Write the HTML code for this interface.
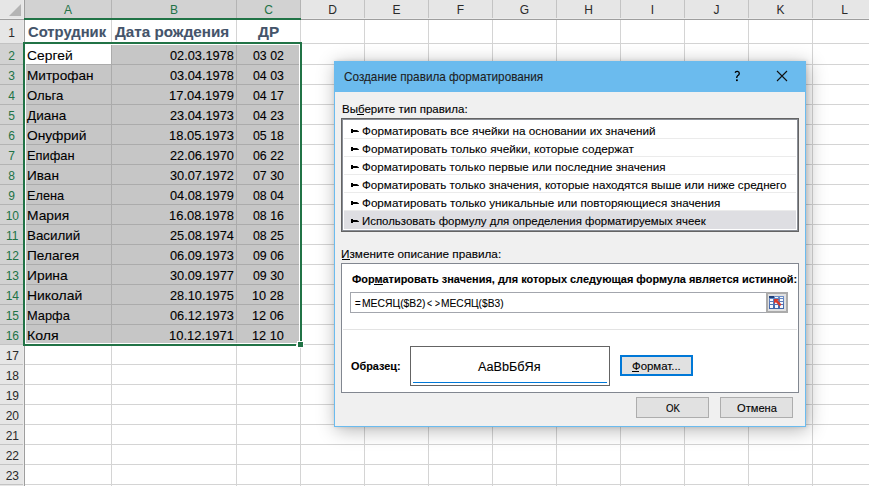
<!DOCTYPE html>
<html><head><meta charset="utf-8"><style>
html,body{margin:0;padding:0;width:869px;height:486px;overflow:hidden;background:#fff;position:relative}
body>div,body>svg{position:absolute}
.t{font-family:"Liberation Sans", sans-serif;white-space:pre;line-height:normal;-webkit-text-stroke:0.1px currentColor}
</style></head><body>
<div style="left:111px;top:20px;width:1px;height:466px;background:#D4D4D4;"></div>
<div style="left:236px;top:20px;width:1px;height:466px;background:#D4D4D4;"></div>
<div style="left:300px;top:20px;width:1px;height:466px;background:#D4D4D4;"></div>
<div style="left:364px;top:20px;width:1px;height:466px;background:#D4D4D4;"></div>
<div style="left:428px;top:20px;width:1px;height:466px;background:#D4D4D4;"></div>
<div style="left:492px;top:20px;width:1px;height:466px;background:#D4D4D4;"></div>
<div style="left:556px;top:20px;width:1px;height:466px;background:#D4D4D4;"></div>
<div style="left:620px;top:20px;width:1px;height:466px;background:#D4D4D4;"></div>
<div style="left:684px;top:20px;width:1px;height:466px;background:#D4D4D4;"></div>
<div style="left:748px;top:20px;width:1px;height:466px;background:#D4D4D4;"></div>
<div style="left:812px;top:20px;width:1px;height:466px;background:#D4D4D4;"></div>
<div style="left:876px;top:20px;width:1px;height:466px;background:#D4D4D4;"></div>
<div style="left:25px;top:43px;width:844px;height:1px;background:#D4D4D4;"></div>
<div style="left:25px;top:64px;width:844px;height:1px;background:#D4D4D4;"></div>
<div style="left:25px;top:84px;width:844px;height:1px;background:#D4D4D4;"></div>
<div style="left:25px;top:104px;width:844px;height:1px;background:#D4D4D4;"></div>
<div style="left:25px;top:124px;width:844px;height:1px;background:#D4D4D4;"></div>
<div style="left:25px;top:144px;width:844px;height:1px;background:#D4D4D4;"></div>
<div style="left:25px;top:164px;width:844px;height:1px;background:#D4D4D4;"></div>
<div style="left:25px;top:184px;width:844px;height:1px;background:#D4D4D4;"></div>
<div style="left:25px;top:204px;width:844px;height:1px;background:#D4D4D4;"></div>
<div style="left:25px;top:224px;width:844px;height:1px;background:#D4D4D4;"></div>
<div style="left:25px;top:244px;width:844px;height:1px;background:#D4D4D4;"></div>
<div style="left:25px;top:264px;width:844px;height:1px;background:#D4D4D4;"></div>
<div style="left:25px;top:284px;width:844px;height:1px;background:#D4D4D4;"></div>
<div style="left:25px;top:304px;width:844px;height:1px;background:#D4D4D4;"></div>
<div style="left:25px;top:324px;width:844px;height:1px;background:#D4D4D4;"></div>
<div style="left:25px;top:344px;width:844px;height:1px;background:#D4D4D4;"></div>
<div style="left:25px;top:364px;width:844px;height:1px;background:#D4D4D4;"></div>
<div style="left:25px;top:384px;width:844px;height:1px;background:#D4D4D4;"></div>
<div style="left:25px;top:404px;width:844px;height:1px;background:#D4D4D4;"></div>
<div style="left:25px;top:424px;width:844px;height:1px;background:#D4D4D4;"></div>
<div style="left:25px;top:444px;width:844px;height:1px;background:#D4D4D4;"></div>
<div style="left:25px;top:464px;width:844px;height:1px;background:#D4D4D4;"></div>
<div style="left:25px;top:484px;width:844px;height:1px;background:#D4D4D4;"></div>
<div style="left:25px;top:44px;width:275px;height:300px;background:#FFFFFF;"></div>
<div style="left:26px;top:45px;width:273px;height:298px;background:#C6C6C6;"></div>
<div style="left:111px;top:45px;width:1px;height:298px;background:#ABABAB;"></div>
<div style="left:236px;top:45px;width:1px;height:298px;background:#ABABAB;"></div>
<div style="left:26px;top:64px;width:273px;height:1px;background:#ABABAB;"></div>
<div style="left:26px;top:84px;width:273px;height:1px;background:#ABABAB;"></div>
<div style="left:26px;top:104px;width:273px;height:1px;background:#ABABAB;"></div>
<div style="left:26px;top:124px;width:273px;height:1px;background:#ABABAB;"></div>
<div style="left:26px;top:144px;width:273px;height:1px;background:#ABABAB;"></div>
<div style="left:26px;top:164px;width:273px;height:1px;background:#ABABAB;"></div>
<div style="left:26px;top:184px;width:273px;height:1px;background:#ABABAB;"></div>
<div style="left:26px;top:204px;width:273px;height:1px;background:#ABABAB;"></div>
<div style="left:26px;top:224px;width:273px;height:1px;background:#ABABAB;"></div>
<div style="left:26px;top:244px;width:273px;height:1px;background:#ABABAB;"></div>
<div style="left:26px;top:264px;width:273px;height:1px;background:#ABABAB;"></div>
<div style="left:26px;top:284px;width:273px;height:1px;background:#ABABAB;"></div>
<div style="left:26px;top:304px;width:273px;height:1px;background:#ABABAB;"></div>
<div style="left:26px;top:324px;width:273px;height:1px;background:#ABABAB;"></div>
<div style="left:25px;top:44px;width:86px;height:20px;background:#FFFFFF;"></div>
<div style="left:0px;top:0px;width:869px;height:19px;background:#E6E6E6;"></div>
<div style="left:25px;top:0px;width:275px;height:18px;background:#D2D2D2;"></div>
<div style="left:0px;top:19px;width:24px;height:467px;background:#E6E6E6;"></div>
<div style="left:0px;top:44px;width:24px;height:300px;background:#D2D2D2;"></div>
<div style="left:111px;top:0px;width:1px;height:19px;background:#B4B4B4;"></div>
<div style="left:236px;top:0px;width:1px;height:19px;background:#B4B4B4;"></div>
<div style="left:300px;top:0px;width:1px;height:19px;background:#C3C3C3;"></div>
<div style="left:364px;top:0px;width:1px;height:19px;background:#C3C3C3;"></div>
<div style="left:428px;top:0px;width:1px;height:19px;background:#C3C3C3;"></div>
<div style="left:492px;top:0px;width:1px;height:19px;background:#C3C3C3;"></div>
<div style="left:556px;top:0px;width:1px;height:19px;background:#C3C3C3;"></div>
<div style="left:620px;top:0px;width:1px;height:19px;background:#C3C3C3;"></div>
<div style="left:684px;top:0px;width:1px;height:19px;background:#C3C3C3;"></div>
<div style="left:748px;top:0px;width:1px;height:19px;background:#C3C3C3;"></div>
<div style="left:812px;top:0px;width:1px;height:19px;background:#C3C3C3;"></div>
<div style="left:0px;top:43px;width:24px;height:1px;background:#C3C3C3;"></div>
<div style="left:0px;top:64px;width:24px;height:1px;background:#B4B4B4;"></div>
<div style="left:0px;top:84px;width:24px;height:1px;background:#B4B4B4;"></div>
<div style="left:0px;top:104px;width:24px;height:1px;background:#B4B4B4;"></div>
<div style="left:0px;top:124px;width:24px;height:1px;background:#B4B4B4;"></div>
<div style="left:0px;top:144px;width:24px;height:1px;background:#B4B4B4;"></div>
<div style="left:0px;top:164px;width:24px;height:1px;background:#B4B4B4;"></div>
<div style="left:0px;top:184px;width:24px;height:1px;background:#B4B4B4;"></div>
<div style="left:0px;top:204px;width:24px;height:1px;background:#B4B4B4;"></div>
<div style="left:0px;top:224px;width:24px;height:1px;background:#B4B4B4;"></div>
<div style="left:0px;top:244px;width:24px;height:1px;background:#B4B4B4;"></div>
<div style="left:0px;top:264px;width:24px;height:1px;background:#B4B4B4;"></div>
<div style="left:0px;top:284px;width:24px;height:1px;background:#B4B4B4;"></div>
<div style="left:0px;top:304px;width:24px;height:1px;background:#B4B4B4;"></div>
<div style="left:0px;top:324px;width:24px;height:1px;background:#B4B4B4;"></div>
<div style="left:0px;top:344px;width:24px;height:1px;background:#C3C3C3;"></div>
<div style="left:0px;top:364px;width:24px;height:1px;background:#C3C3C3;"></div>
<div style="left:0px;top:384px;width:24px;height:1px;background:#C3C3C3;"></div>
<div style="left:0px;top:404px;width:24px;height:1px;background:#C3C3C3;"></div>
<div style="left:0px;top:424px;width:24px;height:1px;background:#C3C3C3;"></div>
<div style="left:0px;top:444px;width:24px;height:1px;background:#C3C3C3;"></div>
<div style="left:0px;top:464px;width:24px;height:1px;background:#C3C3C3;"></div>
<div style="left:0px;top:484px;width:24px;height:1px;background:#C3C3C3;"></div>
<div style="left:0px;top:18px;width:869px;height:1px;background:#EBEBEB;"></div>
<div style="left:23px;top:0px;width:1px;height:486px;background:#EBEBEB;"></div>
<div style="left:0px;top:44px;width:23px;height:300px;background:#D2D2D2;"></div>
<div style="left:25px;top:0px;width:275px;height:18px;background:#D2D2D2;"></div>
<div style="left:111px;top:0px;width:1px;height:18px;background:#B4B4B4;"></div>
<div style="left:236px;top:0px;width:1px;height:18px;background:#B4B4B4;"></div>
<div style="left:300px;top:0px;width:1px;height:18px;background:#B4B4B4;"></div>
<div style="left:0px;top:64px;width:23px;height:1px;background:#B4B4B4;"></div>
<div style="left:0px;top:84px;width:23px;height:1px;background:#B4B4B4;"></div>
<div style="left:0px;top:104px;width:23px;height:1px;background:#B4B4B4;"></div>
<div style="left:0px;top:124px;width:23px;height:1px;background:#B4B4B4;"></div>
<div style="left:0px;top:144px;width:23px;height:1px;background:#B4B4B4;"></div>
<div style="left:0px;top:164px;width:23px;height:1px;background:#B4B4B4;"></div>
<div style="left:0px;top:184px;width:23px;height:1px;background:#B4B4B4;"></div>
<div style="left:0px;top:204px;width:23px;height:1px;background:#B4B4B4;"></div>
<div style="left:0px;top:224px;width:23px;height:1px;background:#B4B4B4;"></div>
<div style="left:0px;top:244px;width:23px;height:1px;background:#B4B4B4;"></div>
<div style="left:0px;top:264px;width:23px;height:1px;background:#B4B4B4;"></div>
<div style="left:0px;top:284px;width:23px;height:1px;background:#B4B4B4;"></div>
<div style="left:0px;top:304px;width:23px;height:1px;background:#B4B4B4;"></div>
<div style="left:0px;top:324px;width:23px;height:1px;background:#B4B4B4;"></div>
<div style="left:0px;top:19px;width:869px;height:1px;background:#9E9E9E;"></div>
<div style="left:24px;top:0px;width:1px;height:486px;background:#9E9E9E;"></div>
<div style="left:24px;top:18px;width:277px;height:2px;background:#217346;"></div>
<svg style="position:absolute;left:0;top:0" width="24" height="19"><polygon points="21,4 21,16 9,16" fill="#B4B4B4"/></svg>
<div class="t" style="left:-132.0px;width:400px;text-align:center;top:3.14px;font-size:12px;color:#217346;font-weight:normal;-webkit-text-stroke:0;">A</div>
<div class="t" style="left:-26.0px;width:400px;text-align:center;top:3.14px;font-size:12px;color:#217346;font-weight:normal;-webkit-text-stroke:0;">B</div>
<div class="t" style="left:68.5px;width:400px;text-align:center;top:3.14px;font-size:12px;color:#217346;font-weight:normal;-webkit-text-stroke:0;">C</div>
<div class="t" style="left:132.5px;width:400px;text-align:center;top:3.14px;font-size:12px;color:#2A2A2A;font-weight:normal;-webkit-text-stroke:0;">D</div>
<div class="t" style="left:196.5px;width:400px;text-align:center;top:3.14px;font-size:12px;color:#2A2A2A;font-weight:normal;-webkit-text-stroke:0;">E</div>
<div class="t" style="left:260.5px;width:400px;text-align:center;top:3.14px;font-size:12px;color:#2A2A2A;font-weight:normal;-webkit-text-stroke:0;">F</div>
<div class="t" style="left:324.5px;width:400px;text-align:center;top:3.14px;font-size:12px;color:#2A2A2A;font-weight:normal;-webkit-text-stroke:0;">G</div>
<div class="t" style="left:388.5px;width:400px;text-align:center;top:3.14px;font-size:12px;color:#2A2A2A;font-weight:normal;-webkit-text-stroke:0;">H</div>
<div class="t" style="left:452.5px;width:400px;text-align:center;top:3.14px;font-size:12px;color:#2A2A2A;font-weight:normal;-webkit-text-stroke:0;">I</div>
<div class="t" style="left:516.5px;width:400px;text-align:center;top:3.14px;font-size:12px;color:#2A2A2A;font-weight:normal;-webkit-text-stroke:0;">J</div>
<div class="t" style="left:580.5px;width:400px;text-align:center;top:3.14px;font-size:12px;color:#2A2A2A;font-weight:normal;-webkit-text-stroke:0;">K</div>
<div class="t" style="left:644.5px;width:400px;text-align:center;top:3.14px;font-size:12px;color:#2A2A2A;font-weight:normal;-webkit-text-stroke:0;">L</div>
<div class="t" style="left:-188.5px;width:400px;text-align:center;top:26.14px;font-size:12px;color:#2A2A2A;font-weight:normal;-webkit-text-stroke:0;">1</div>
<div class="t" style="left:-188.5px;width:400px;text-align:center;top:48.94px;font-size:12px;color:#217346;font-weight:normal;-webkit-text-stroke:0;">2</div>
<div class="t" style="left:-188.5px;width:400px;text-align:center;top:68.94px;font-size:12px;color:#217346;font-weight:normal;-webkit-text-stroke:0;">3</div>
<div class="t" style="left:-188.5px;width:400px;text-align:center;top:88.94px;font-size:12px;color:#217346;font-weight:normal;-webkit-text-stroke:0;">4</div>
<div class="t" style="left:-188.5px;width:400px;text-align:center;top:108.94px;font-size:12px;color:#217346;font-weight:normal;-webkit-text-stroke:0;">5</div>
<div class="t" style="left:-188.5px;width:400px;text-align:center;top:128.94px;font-size:12px;color:#217346;font-weight:normal;-webkit-text-stroke:0;">6</div>
<div class="t" style="left:-188.5px;width:400px;text-align:center;top:148.94px;font-size:12px;color:#217346;font-weight:normal;-webkit-text-stroke:0;">7</div>
<div class="t" style="left:-188.5px;width:400px;text-align:center;top:168.94px;font-size:12px;color:#217346;font-weight:normal;-webkit-text-stroke:0;">8</div>
<div class="t" style="left:-188.5px;width:400px;text-align:center;top:188.94px;font-size:12px;color:#217346;font-weight:normal;-webkit-text-stroke:0;">9</div>
<div class="t" style="left:-187.7px;width:400px;text-align:center;top:208.94px;font-size:12px;color:#217346;font-weight:normal;-webkit-text-stroke:0;">10</div>
<div class="t" style="left:-187.7px;width:400px;text-align:center;top:228.94px;font-size:12px;color:#217346;font-weight:normal;-webkit-text-stroke:0;">11</div>
<div class="t" style="left:-187.7px;width:400px;text-align:center;top:248.94px;font-size:12px;color:#217346;font-weight:normal;-webkit-text-stroke:0;">12</div>
<div class="t" style="left:-187.7px;width:400px;text-align:center;top:268.94px;font-size:12px;color:#217346;font-weight:normal;-webkit-text-stroke:0;">13</div>
<div class="t" style="left:-187.7px;width:400px;text-align:center;top:288.94px;font-size:12px;color:#217346;font-weight:normal;-webkit-text-stroke:0;">14</div>
<div class="t" style="left:-187.7px;width:400px;text-align:center;top:308.94px;font-size:12px;color:#217346;font-weight:normal;-webkit-text-stroke:0;">15</div>
<div class="t" style="left:-187.7px;width:400px;text-align:center;top:328.94px;font-size:12px;color:#217346;font-weight:normal;-webkit-text-stroke:0;">16</div>
<div class="t" style="left:-187.7px;width:400px;text-align:center;top:348.94px;font-size:12px;color:#2A2A2A;font-weight:normal;-webkit-text-stroke:0;">17</div>
<div class="t" style="left:-187.7px;width:400px;text-align:center;top:368.94px;font-size:12px;color:#2A2A2A;font-weight:normal;-webkit-text-stroke:0;">18</div>
<div class="t" style="left:-187.7px;width:400px;text-align:center;top:388.94px;font-size:12px;color:#2A2A2A;font-weight:normal;-webkit-text-stroke:0;">19</div>
<div class="t" style="left:-187.7px;width:400px;text-align:center;top:408.94px;font-size:12px;color:#2A2A2A;font-weight:normal;-webkit-text-stroke:0;">20</div>
<div class="t" style="left:-187.7px;width:400px;text-align:center;top:428.94px;font-size:12px;color:#2A2A2A;font-weight:normal;-webkit-text-stroke:0;">21</div>
<div class="t" style="left:-187.7px;width:400px;text-align:center;top:448.94px;font-size:12px;color:#2A2A2A;font-weight:normal;-webkit-text-stroke:0;">22</div>
<div class="t" style="left:-187.7px;width:400px;text-align:center;top:468.94px;font-size:12px;color:#2A2A2A;font-weight:normal;-webkit-text-stroke:0;">23</div>
<div class="t" style="left:27.70px;top:22.97px;font-size:15.5px;color:#44546A;font-weight:bold;transform:scaleX(0.9537);transform-origin:0 0">Сотрудник</div>
<div class="t" style="left:114.70px;top:22.97px;font-size:15.5px;color:#44546A;font-weight:bold;transform:scaleX(0.9819);transform-origin:0 0">Дата рождения</div>
<div class="t" style="left:258.40px;top:22.97px;font-size:15.5px;color:#44546A;font-weight:bold;transform:scaleX(0.9905);transform-origin:0 0">ДР</div>
<div class="t" style="left:26.60px;top:48.05px;font-size:13.2px;color:#000;font-weight:normal;transform:scaleX(1.0512);transform-origin:0 0">Сергей</div>
<div class="t" style="left:170.40px;top:48.33px;font-size:12.9px;color:#000;font-weight:normal;transform:scaleX(0.9906);transform-origin:0 0">02.03.1978</div>
<div class="t" style="left:253.30px;top:48.33px;font-size:12.9px;color:#000;font-weight:normal;transform:scaleX(0.9562);transform-origin:0 0">03 02</div>
<div class="t" style="left:26.60px;top:68.05px;font-size:13.2px;color:#000;font-weight:normal;transform:scaleX(1.0297);transform-origin:0 0">Митрофан</div>
<div class="t" style="left:170.40px;top:68.33px;font-size:12.9px;color:#000;font-weight:normal;transform:scaleX(0.9906);transform-origin:0 0">03.04.1978</div>
<div class="t" style="left:253.30px;top:68.33px;font-size:12.9px;color:#000;font-weight:normal;transform:scaleX(0.9562);transform-origin:0 0">04 03</div>
<div class="t" style="left:26.60px;top:88.05px;font-size:13.2px;color:#000;font-weight:normal;transform:scaleX(0.9973);transform-origin:0 0">Ольга</div>
<div class="t" style="left:169.39px;top:88.33px;font-size:12.9px;color:#000;font-weight:normal;transform:scaleX(1.0063);transform-origin:0 0">17.04.1979</div>
<div class="t" style="left:253.30px;top:88.33px;font-size:12.9px;color:#000;font-weight:normal;transform:scaleX(0.9562);transform-origin:0 0">04 17</div>
<div class="t" style="left:26.60px;top:108.05px;font-size:13.2px;color:#000;font-weight:normal;transform:scaleX(1.0256);transform-origin:0 0">Диана</div>
<div class="t" style="left:170.40px;top:108.33px;font-size:12.9px;color:#000;font-weight:normal;transform:scaleX(0.9906);transform-origin:0 0">23.04.1973</div>
<div class="t" style="left:253.30px;top:108.33px;font-size:12.9px;color:#000;font-weight:normal;transform:scaleX(0.9562);transform-origin:0 0">04 23</div>
<div class="t" style="left:26.60px;top:128.05px;font-size:13.2px;color:#000;font-weight:normal;transform:scaleX(1.0446);transform-origin:0 0">Онуфрий</div>
<div class="t" style="left:169.39px;top:128.33px;font-size:12.9px;color:#000;font-weight:normal;transform:scaleX(1.0063);transform-origin:0 0">18.05.1973</div>
<div class="t" style="left:253.30px;top:128.33px;font-size:12.9px;color:#000;font-weight:normal;transform:scaleX(0.9562);transform-origin:0 0">05 18</div>
<div class="t" style="left:26.60px;top:148.05px;font-size:13.2px;color:#000;font-weight:normal;transform:scaleX(0.9750);transform-origin:0 0">Епифан</div>
<div class="t" style="left:170.40px;top:148.33px;font-size:12.9px;color:#000;font-weight:normal;transform:scaleX(0.9906);transform-origin:0 0">22.06.1970</div>
<div class="t" style="left:253.30px;top:148.33px;font-size:12.9px;color:#000;font-weight:normal;transform:scaleX(0.9562);transform-origin:0 0">06 22</div>
<div class="t" style="left:26.60px;top:168.05px;font-size:13.2px;color:#000;font-weight:normal;transform:scaleX(1.0323);transform-origin:0 0">Иван</div>
<div class="t" style="left:170.40px;top:168.33px;font-size:12.9px;color:#000;font-weight:normal;transform:scaleX(0.9906);transform-origin:0 0">30.07.1972</div>
<div class="t" style="left:253.30px;top:168.33px;font-size:12.9px;color:#000;font-weight:normal;transform:scaleX(0.9562);transform-origin:0 0">07 30</div>
<div class="t" style="left:26.60px;top:188.05px;font-size:13.2px;color:#000;font-weight:normal;transform:scaleX(0.9641);transform-origin:0 0">Елена</div>
<div class="t" style="left:170.40px;top:188.33px;font-size:12.9px;color:#000;font-weight:normal;transform:scaleX(0.9906);transform-origin:0 0">04.08.1979</div>
<div class="t" style="left:253.30px;top:188.33px;font-size:12.9px;color:#000;font-weight:normal;transform:scaleX(0.9562);transform-origin:0 0">08 04</div>
<div class="t" style="left:26.60px;top:208.05px;font-size:13.2px;color:#000;font-weight:normal;transform:scaleX(1.0450);transform-origin:0 0">Мария</div>
<div class="t" style="left:169.39px;top:208.33px;font-size:12.9px;color:#000;font-weight:normal;transform:scaleX(1.0063);transform-origin:0 0">16.08.1978</div>
<div class="t" style="left:253.30px;top:208.33px;font-size:12.9px;color:#000;font-weight:normal;transform:scaleX(0.9562);transform-origin:0 0">08 16</div>
<div class="t" style="left:26.60px;top:228.05px;font-size:13.2px;color:#000;font-weight:normal;transform:scaleX(1.0135);transform-origin:0 0">Василий</div>
<div class="t" style="left:170.40px;top:228.33px;font-size:12.9px;color:#000;font-weight:normal;transform:scaleX(0.9906);transform-origin:0 0">25.08.1974</div>
<div class="t" style="left:253.30px;top:228.33px;font-size:12.9px;color:#000;font-weight:normal;transform:scaleX(0.9562);transform-origin:0 0">08 25</div>
<div class="t" style="left:26.60px;top:248.05px;font-size:13.2px;color:#000;font-weight:normal;transform:scaleX(1.0340);transform-origin:0 0">Пелагея</div>
<div class="t" style="left:170.40px;top:248.33px;font-size:12.9px;color:#000;font-weight:normal;transform:scaleX(0.9906);transform-origin:0 0">06.09.1973</div>
<div class="t" style="left:253.30px;top:248.33px;font-size:12.9px;color:#000;font-weight:normal;transform:scaleX(0.9562);transform-origin:0 0">09 06</div>
<div class="t" style="left:26.60px;top:268.05px;font-size:13.2px;color:#000;font-weight:normal;transform:scaleX(1.0487);transform-origin:0 0">Ирина</div>
<div class="t" style="left:170.40px;top:268.33px;font-size:12.9px;color:#000;font-weight:normal;transform:scaleX(0.9906);transform-origin:0 0">30.09.1977</div>
<div class="t" style="left:253.30px;top:268.33px;font-size:12.9px;color:#000;font-weight:normal;transform:scaleX(0.9562);transform-origin:0 0">09 30</div>
<div class="t" style="left:26.60px;top:288.05px;font-size:13.2px;color:#000;font-weight:normal;transform:scaleX(1.0577);transform-origin:0 0">Николай</div>
<div class="t" style="left:170.40px;top:288.33px;font-size:12.9px;color:#000;font-weight:normal;transform:scaleX(0.9906);transform-origin:0 0">28.10.1975</div>
<div class="t" style="left:252.31px;top:288.33px;font-size:12.9px;color:#000;font-weight:normal;transform:scaleX(0.9871);transform-origin:0 0">10 28</div>
<div class="t" style="left:26.60px;top:308.05px;font-size:13.2px;color:#000;font-weight:normal;transform:scaleX(0.9727);transform-origin:0 0">Марфа</div>
<div class="t" style="left:170.40px;top:308.33px;font-size:12.9px;color:#000;font-weight:normal;transform:scaleX(0.9906);transform-origin:0 0">06.12.1973</div>
<div class="t" style="left:252.31px;top:308.33px;font-size:12.9px;color:#000;font-weight:normal;transform:scaleX(0.9871);transform-origin:0 0">12 06</div>
<div class="t" style="left:26.60px;top:328.05px;font-size:13.2px;color:#000;font-weight:normal;transform:scaleX(1.0690);transform-origin:0 0">Коля</div>
<div class="t" style="left:169.39px;top:328.33px;font-size:12.9px;color:#000;font-weight:normal;transform:scaleX(1.0063);transform-origin:0 0">10.12.1971</div>
<div class="t" style="left:252.31px;top:328.33px;font-size:12.9px;color:#000;font-weight:normal;transform:scaleX(0.9871);transform-origin:0 0">12 10</div>
<div style="left:23px;top:42px;width:279px;height:2px;background:#217346;"></div>
<div style="left:23px;top:42px;width:2px;height:304px;background:#217346;"></div>
<div style="left:300px;top:42px;width:2px;height:300px;background:#217346;"></div>
<div style="left:23px;top:344px;width:273px;height:2px;background:#217346;"></div>
<div style="left:297px;top:341px;width:7px;height:7px;background:#FFFFFF;"></div>
<div style="left:298px;top:342px;width:5px;height:5px;background:#217346;"></div>
<div style="left:334px;top:61px;width:472px;height:366px;box-shadow:2px 3px 18px rgba(0,0,0,0.30), 1px 0 4px rgba(0,0,0,0.12);background:#F0F0F0"></div>
<div style="left:334px;top:61px;width:472px;height:366px;background:#6BBBEE;"></div>
<div style="left:335px;top:92px;width:470px;height:334px;background:#F0F0F0;"></div>
<div class="t" style="left:343.60px;top:69.96px;font-size:12.2px;color:#1E1E1E;font-weight:normal;transform:scaleX(0.9636);transform-origin:0 0">Создание правила форматирования</div>
<svg style="position:absolute;left:731px;top:68px" width="12" height="16"><path d="M4.0 4.6 Q5.0 3.3 6.6 3.4 Q8.4 3.7 8.3 5.6 Q8.1 6.8 6.6 7.8 Q5.7 8.5 5.7 10.1" fill="none" stroke="#000" stroke-width="1.35"/><rect x="5.0" y="11.4" width="1.8" height="1.7" fill="#000"/></svg>
<svg style="position:absolute;left:776px;top:70px" width="12" height="12"><path d="M1 1 L11 11 M11 1 L1 11" stroke="#111" stroke-width="1.1"/></svg>
<div class="t" style="left:341.50px;top:102.99px;font-size:11.5px;color:#000;font-weight:normal;transform:scaleX(1.0024);transform-origin:0 0">Выберите тип правила:</div>
<div style="left:341px;top:118px;width:458px;height:114px;background:#FFFFFF;box-sizing:border-box;border:1px solid #646464;"></div>
<div style="left:342px;top:119px;width:456px;height:112px;background:transparent;box-sizing:border-box;border:1px solid #8A8E96;"></div>
<div style="left:344px;top:210px;width:452px;height:19px;background:#DEDEE2;"></div>
<div style="left:344px;top:138px;width:452px;height:1px;background:#EBEBEB;"></div>
<svg style="position:absolute;left:350px;top:129px" width="10" height="6"><path d="M1 0 H3 V1 H7 L9 2.6 V3 H3 V4 H1 Z" fill="#000"/></svg>
<div class="t" style="left:362.20px;top:123.50px;font-size:11.6px;color:#000;font-weight:normal;transform:scaleX(1.0114);transform-origin:0 0">Форматировать все ячейки на основании их значений</div>
<div style="left:344px;top:156px;width:452px;height:1px;background:#EBEBEB;"></div>
<svg style="position:absolute;left:350px;top:147px" width="10" height="6"><path d="M1 0 H3 V1 H7 L9 2.6 V3 H3 V4 H1 Z" fill="#000"/></svg>
<div class="t" style="left:362.20px;top:141.50px;font-size:11.6px;color:#000;font-weight:normal;transform:scaleX(1.0138);transform-origin:0 0">Форматировать только ячейки, которые содержат</div>
<div style="left:344px;top:174px;width:452px;height:1px;background:#EBEBEB;"></div>
<svg style="position:absolute;left:350px;top:165px" width="10" height="6"><path d="M1 0 H3 V1 H7 L9 2.6 V3 H3 V4 H1 Z" fill="#000"/></svg>
<div class="t" style="left:362.20px;top:159.50px;font-size:11.6px;color:#000;font-weight:normal;transform:scaleX(1.0013);transform-origin:0 0">Форматировать только первые или последние значения</div>
<div style="left:344px;top:192px;width:452px;height:1px;background:#EBEBEB;"></div>
<svg style="position:absolute;left:350px;top:183px" width="10" height="6"><path d="M1 0 H3 V1 H7 L9 2.6 V3 H3 V4 H1 Z" fill="#000"/></svg>
<div class="t" style="left:362.20px;top:177.50px;font-size:11.6px;color:#000;font-weight:normal;transform:scaleX(1.0028);transform-origin:0 0">Форматировать только значения, которые находятся выше или ниже среднего</div>
<div style="left:344px;top:210px;width:452px;height:1px;background:#EBEBEB;"></div>
<svg style="position:absolute;left:350px;top:201px" width="10" height="6"><path d="M1 0 H3 V1 H7 L9 2.6 V3 H3 V4 H1 Z" fill="#000"/></svg>
<div class="t" style="left:362.20px;top:195.50px;font-size:11.6px;color:#000;font-weight:normal;transform:scaleX(1.0070);transform-origin:0 0">Форматировать только уникальные или повторяющиеся значения</div>
<svg style="position:absolute;left:350px;top:219px" width="10" height="6"><path d="M1 0 H3 V1 H7 L9 2.6 V3 H3 V4 H1 Z" fill="#000"/></svg>
<div class="t" style="left:362.20px;top:213.50px;font-size:11.6px;color:#000;font-weight:normal;transform:scaleX(0.9848);transform-origin:0 0">Использовать формулу для определения форматируемых ячеек</div>
<div class="t" style="left:340.89px;top:247.10px;font-size:11.6px;color:#000;font-weight:normal;transform:scaleX(1.0135);transform-origin:0 0">Измените описание правила:</div>
<div style="left:341px;top:263px;width:458px;height:130px;background:#FFFFFF;box-sizing:border-box;border:1px solid #828790;"></div>
<div class="t" style="left:351.60px;top:272.84px;font-size:10.9px;color:#000;font-weight:bold;transform:scaleX(1.0045);transform-origin:0 0">Форматировать значения, для которых следующая формула является истинной:</div>
<div style="left:350px;top:292px;width:438px;height:21px;background:#FFFFFF;box-sizing:border-box;border:1px solid #A3A6AD;"></div>
<div class="t" style="left:355.20px;top:296.79px;font-size:11.5px;color:#000;font-weight:normal;-webkit-text-stroke:0.1px currentColor;transform:scaleX(0.8286);transform-origin:0 0">=</div>
<div class="t" style="left:361.60px;top:296.79px;font-size:11.5px;color:#000;font-weight:normal;-webkit-text-stroke:0.1px currentColor;transform:scaleX(0.9000);transform-origin:0 0">МЕСЯЦ($B2)</div>
<div class="t" style="left:427.30px;top:296.79px;font-size:11.5px;color:#000;font-weight:normal;-webkit-text-stroke:0.1px currentColor;transform:scaleX(0.7429);transform-origin:0 0">&lt;</div>
<div class="t" style="left:434.70px;top:296.79px;font-size:11.5px;color:#000;font-weight:normal;-webkit-text-stroke:0.1px currentColor;transform:scaleX(0.7429);transform-origin:0 0">&gt;</div>
<div class="t" style="left:440.81px;top:296.79px;font-size:11.5px;color:#000;font-weight:normal;-webkit-text-stroke:0.1px currentColor;transform:scaleX(0.8870);transform-origin:0 0">МЕСЯЦ($B3)</div>
<div style="left:766px;top:292px;width:22px;height:21px;background:#E1E1E1;box-sizing:border-box;border:2px solid #ABABAB;"></div>
<svg style="position:absolute;left:769px;top:296px" width="15" height="13">
<defs><linearGradient id="g1" x1="0" y1="0" x2="0" y2="1"><stop offset="0" stop-color="#6E8FC8"/><stop offset="1" stop-color="#3F63A8"/></linearGradient></defs>
<rect x="0" y="0" width="15" height="13" fill="url(#g1)"/>
<g fill="#F4F8FD"><rect x="1" y="3" width="3" height="2"/><rect x="6" y="3" width="3" height="2"/><rect x="11" y="3" width="3" height="2"/>
<rect x="1" y="6" width="3" height="2"/><rect x="6" y="6" width="3" height="2"/><rect x="11" y="6" width="3" height="2"/>
<rect x="1" y="9" width="3" height="3"/><rect x="6" y="9" width="3" height="3"/><rect x="11" y="9" width="3" height="3"/>
<rect x="6" y="1" width="3" height="1"/><rect x="11" y="1" width="3" height="1"/></g>
<rect x="0" y="0" width="5" height="2" fill="#1F3F7A"/>
<path d="M5 3 L10 3 L8.6 4.6 L12.5 8.5 L10.8 10.2 L6.9 6.3 L5 7.8 Z" fill="#D8382C"/>
</svg>
<div style="left:343px;top:329px;width:454px;height:1px;background:#E3E3E3;"></div>
<div class="t" style="left:351.00px;top:359.64px;font-size:10.9px;color:#000;font-weight:bold;transform:scaleX(0.9980);transform-origin:0 0">Образец:</div>
<div style="left:410px;top:346px;width:200px;height:40px;background:#FFFFFF;box-sizing:border-box;border:1px solid #646464;"></div>
<div style="left:413px;top:382px;width:194px;height:1px;background:#0078D7;"></div>
<div class="t" style="left:478.00px;top:359.64px;font-size:12px;color:#000;font-weight:normal;transform:scaleX(1.0542);transform-origin:0 0">AaBbБбЯя</div>
<div style="left:620px;top:355px;width:73px;height:21px;background:#E1E1E1;box-sizing:border-box;border:2px solid #0078D7;"></div>
<div class="t" style="left:631.80px;top:359.59px;font-size:11.5px;color:#000;font-weight:normal;transform:scaleX(0.9918);transform-origin:0 0">Формат...</div>
<div style="left:636px;top:397px;width:73px;height:21px;background:#E1E1E1;box-sizing:border-box;border:1px solid #ADADAD;"></div>
<div class="t" style="left:665.60px;top:401.59px;font-size:11.5px;color:#000;font-weight:normal;transform:scaleX(0.8412);transform-origin:0 0">OK</div>
<div style="left:720px;top:397px;width:73px;height:21px;background:#E1E1E1;box-sizing:border-box;border:1px solid #ADADAD;"></div>
<div class="t" style="left:736.70px;top:401.59px;font-size:11.5px;color:#000;font-weight:normal;transform:scaleX(0.9683);transform-origin:0 0">Отмена</div>
<div style="left:357px;top:114px;width:7px;height:1px;background:#000;"></div>
<div style="left:342px;top:259px;width:8px;height:1px;background:#000;"></div>
<div style="left:374px;top:284px;width:9px;height:1px;background:#000;"></div>
<div style="left:632px;top:371px;width:7px;height:1px;background:#000;"></div>
</body></html>
